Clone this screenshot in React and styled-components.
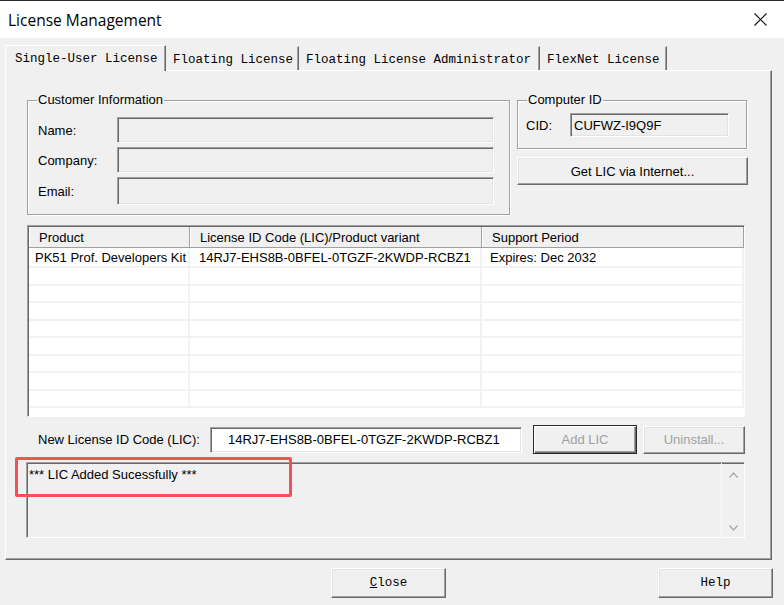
import React from "react";
import styled, { createGlobalStyle } from "styled-components";

const GlobalStyle = createGlobalStyle`
  html, body { margin: 0; padding: 0; background: #f0f0f0; }
  #root { width: 784px; height: 605px; }
`;

const ui = `"Liberation Sans", Arial, sans-serif`;
const mono = `"Liberation Mono", "Courier New", monospace`;

const Window = styled.div`
  position: relative;
  width: 784px;
  height: 605px;
  display: flex;
  flex-direction: column;
  background: #f0f0f0;
  overflow: hidden;
  font-family: ${ui};
  font-size: 13px;
  color: #000;
`;

const TitleBar = styled.div`
  height: 38px;
  box-sizing: border-box;
  border-top: 1px solid #2a2a2a;
  background: #fff;
  display: flex;
  align-items: center;
  justify-content: space-between;
  padding: 0 17px 0 8px;
`;

const Title = styled.span`
  font-family: "Open Sans", "Noto Sans", sans-serif;
  font-size: 15.5px;
  color: #000;
`;

const CloseGlyph = styled.svg`
  width: 13px;
  height: 13px;
  display: block;
`;

const Body = styled.div`
  flex: 1;
  display: flex;
  flex-direction: column;
  padding: 6px 11px 0 5px;
`;

const TabStrip = styled.div`
  display: flex;
  align-items: flex-end;
  height: 26px;
`;

const Tab = styled.div`
  height: ${(p) => (p.$active ? 26 : 24)}px;
  box-sizing: border-box;
  width: ${(p) => p.$w}px;
  padding-left: ${(p) => (p.$active ? 9 : 6)}px;
  display: flex;
  align-items: center;
  font-family: ${mono};
  font-size: 12.5px;
  color: #000;
  background: #f0f0f0;
  border-top: 1px solid ${(p) => (p.$active ? "#fff" : "#f0f0f0")};
  border-left: 1px solid ${(p) => (p.$active ? "#fff" : "#f0f0f0")};
  border-right: 1px solid #696969;
  box-shadow: inset -1px 0 #a0a0a0;
  padding-top: ${(p) => (p.$active ? 0 : 2)}px;
  margin-bottom: ${(p) => (p.$active ? -1 : 0)}px;
  position: relative;
  z-index: ${(p) => (p.$active ? 2 : 1)};
`;

const Panel = styled.div`
  width: 767px;
  height: 490px;
  box-sizing: border-box;
  border-top: 1px solid #fff;
  border-left: 1px solid #fff;
  border-right: 1px solid #696969;
  border-bottom: 1px solid #696969;
  box-shadow: inset -1px -1px #a0a0a0;
  padding: 22px 0 0 21px;
  display: flex;
  flex-direction: column;
`;

const TopGrid = styled.div`
  display: grid;
  grid-template-columns: 483px 231px;
  column-gap: 7px;
  align-items: start;
`;

const Group = styled.fieldset`
  margin: 0;
  padding: 0 10px;
  min-width: 0;
  box-sizing: border-box;
  width: ${(p) => p.$w}px;
  height: ${(p) => p.$h}px;
  border: 1px solid #a0a0a0;
  box-shadow: inset 1px 1px #fff, 1px 1px #fff;
`;

const Legend = styled.legend`
  padding: 0 1px;
  margin-left: -1px;
  font-size: 13px;
  line-height: 14px;
  color: #000;
`;

const FieldRows = styled.div`
  display: flex;
  flex-direction: column;
  gap: 4px;
  padding-top: 10px;
`;

const FieldRow = styled.div`
  display: flex;
  align-items: center;
`;

const FieldLabel = styled.span`
  width: ${(p) => p.$w}px;
  flex-shrink: 0;
`;

const Sunken = styled.div`
  box-sizing: border-box;
  width: ${(p) => p.$w}px;
  height: ${(p) => p.$h}px;
  background: ${(p) => (p.$white ? "#fff" : "#f0f0f0")};
  border-style: solid;
  border-width: 1px;
  border-color: #a0a0a0 #fff #fff #a0a0a0;
  box-shadow: inset 1px 1px #696969, inset -1px -1px #e3e3e3;
  display: flex;
  align-items: center;
  padding-left: ${(p) => p.$pad || 0}px;
  font-size: 13px;
  white-space: nowrap;
`;

const RightColumn = styled.div`
  display: flex;
  flex-direction: column;
  gap: 8px;
`;

const CidRow = styled.div`
  display: flex;
  align-items: center;
  padding-top: 6px;
  margin-left: -2px;
`;

const Button = styled.div`
  box-sizing: border-box;
  width: ${(p) => p.$w}px;
  height: ${(p) => p.$h}px;
  background: #f0f0f0;
  display: flex;
  align-items: center;
  justify-content: center;
  border-style: solid;
  border-width: 1px;
  border-color: ${(p) =>
    p.$default ? "#2b2b2b #2b2b2b #2b2b2b #2b2b2b" : "#fff #696969 #696969 #fff"};
  box-shadow: ${(p) =>
    p.$default
      ? "inset 1px 1px #fff, inset -1px -1px #696969, inset -2px -2px #a0a0a0"
      : "inset -1px -1px #a0a0a0, inset 1px 1px #e3e3e3"};
  color: ${(p) => (p.$disabled ? "#a0a0a0" : "#000")};
  font-family: ${(p) => (p.$mono ? mono : ui)};
  font-size: ${(p) => (p.$mono ? 12.5 : 13)}px;
  flex-shrink: 0;
`;

const Accel = styled.span`
  text-decoration: underline;
`;

const ListView = styled.div`
  margin-top: 10px;
  width: 718px;
  height: 192px;
  box-sizing: border-box;
  border-style: solid;
  border-width: 1px;
  border-color: #a0a0a0 #fff #fff #a0a0a0;
  box-shadow: inset 1px 1px #696969;
  background: #fff;
  padding: 1px 0 0 1px;
  overflow: hidden;
`;

const Cols = `161px 292px 1fr`;

const HeaderRow = styled.div`
  display: grid;
  grid-template-columns: ${Cols};
  height: 21px;
  background: #f0f0f0;
  border-bottom: 1px solid #a0a0a0;
  box-sizing: border-box;
`;

const HeaderCell = styled.div`
  display: flex;
  align-items: center;
  padding-left: 9px;
  border-left: 1px solid #fff;
  border-right: 1px solid #a0a0a0;
  white-space: nowrap;
  overflow: hidden;
`;

const Row = styled.div`
  display: grid;
  grid-template-columns: ${Cols};
  height: ${(p) => p.$h}px;
  box-sizing: border-box;
  border-bottom: 2px solid #f2f2f2;
`;

const Cell = styled.div`
  display: flex;
  align-items: center;
  padding-left: ${(p) => p.$pad}px;
  border-right: 2px solid #f2f2f2;
  white-space: nowrap;
  overflow: hidden;
`;

const LicRow = styled.div`
  margin-top: 8px;
  display: flex;
  align-items: center;
  height: 29px;
  padding-left: 11px;
`;

const LicLabel = styled.span`
  width: 172px;
  flex-shrink: 0;
`;

const Gap = styled.div`
  width: ${(p) => p.$w}px;
  flex-shrink: 0;
`;

const StatusBox = styled.div`
  margin: 8px 0 0 -1px;
  width: 719px;
  height: 76px;
  box-sizing: border-box;
  border-style: solid;
  border-width: 1px;
  border-color: #a0a0a0 #fff #fff #a0a0a0;
  box-shadow: inset 1px 1px #696969;
  display: flex;
`;

const StatusText = styled.div`
  flex: 1;
  padding: 4px 0 0 2px;
  font-size: 13px;
  line-height: 16px;
`;

const ScrollTrack = styled.div`
  width: 22px;
  border-left: 1px solid #f8f8f8;
  display: flex;
  flex-direction: column;
  justify-content: space-between;
  align-items: center;
  padding: 9px 0 6px;
`;

const Chevron = styled.svg`
  width: 9px;
  height: 6px;
  display: block;
`;

const Footer = styled.div`
  margin-top: 8px;
  display: flex;
  justify-content: space-between;
  padding-left: 326px;
`;

const Highlight = styled.div`
  position: absolute;
  left: 15px;
  top: 457px;
  width: 277px;
  height: 40px;
  box-sizing: border-box;
  border: 3px solid #f15352;
  border-radius: 2px;
  pointer-events: none;
`;

const tabs = [
  { label: "Single-User License", w: 161, active: true },
  { label: "Floating License", w: 133 },
  { label: "Floating License Administrator", w: 241 },
  { label: "FlexNet License", w: 127 },
];

// alternating heights give the 17.5px row pitch of the list control
const emptyRowHeights = [18, 17, 18, 17, 18, 17, 18, 17];

export default function App() {
  return (
    <>
      <GlobalStyle />
      <Window>
        <TitleBar>
          <Title>License Management</Title>
          <CloseGlyph viewBox="0 0 13 13">
            <path d="M0.5 0.5 L12.5 12.5 M12.5 0.5 L0.5 12.5" stroke="#111" strokeWidth="1.1" />
          </CloseGlyph>
        </TitleBar>
        <Body>
          <TabStrip>
            {tabs.map((t) => (
              <Tab key={t.label} $w={t.w} $active={t.active}>
                {t.label}
              </Tab>
            ))}
          </TabStrip>
          <Panel>
            <TopGrid>
              <Group $w={483} $h={122}>
                <Legend>Customer Information</Legend>
                <FieldRows>
                  <FieldRow>
                    <FieldLabel $w={79}>Name:</FieldLabel>
                    <Sunken $w={377} $h={26} />
                  </FieldRow>
                  <FieldRow>
                    <FieldLabel $w={79}>Company:</FieldLabel>
                    <Sunken $w={377} $h={26} />
                  </FieldRow>
                  <FieldRow>
                    <FieldLabel $w={79}>Email:</FieldLabel>
                    <Sunken $w={377} $h={28} />
                  </FieldRow>
                </FieldRows>
              </Group>
              <RightColumn>
                <Group $w={230} $h={56}>
                  <Legend>Computer ID</Legend>
                  <CidRow>
                    <FieldLabel $w={44}>CID:</FieldLabel>
                    <Sunken $w={159} $h={24} $pad={3}>
                      CUFWZ-I9Q9F
                    </Sunken>
                  </CidRow>
                </Group>
                <Button $w={231} $h={28}>
                  Get LIC via Internet...
                </Button>
              </RightColumn>
            </TopGrid>

            <ListView>
              <HeaderRow>
                <HeaderCell>Product</HeaderCell>
                <HeaderCell>License ID Code (LIC)/Product variant</HeaderCell>
                <HeaderCell>Support Period</HeaderCell>
              </HeaderRow>
              <Row $h={20}>
                <Cell $pad={6}>PK51 Prof. Developers Kit</Cell>
                <Cell $pad={9}>14RJ7-EHS8B-0BFEL-0TGZF-2KWDP-RCBZ1</Cell>
                <Cell $pad={8}>Expires: Dec 2032</Cell>
              </Row>
              {emptyRowHeights.map((h, i) => (
                <Row key={i} $h={h}>
                  <Cell />
                  <Cell />
                  <Cell />
                </Row>
              ))}
            </ListView>

            <LicRow>
              <LicLabel>New License ID Code (LIC):</LicLabel>
              <Sunken $w={312} $h={26} $white $pad={17}>
                14RJ7-EHS8B-0BFEL-0TGZF-2KWDP-RCBZ1
              </Sunken>
              <Gap $w={11} />
              <Button $w={104} $h={29} $default $disabled>
                Add LIC
              </Button>
              <Gap $w={6} />
              <Button $w={102} $h={28} $disabled>
                Uninstall...
              </Button>
            </LicRow>

            <StatusBox>
              <StatusText>*** LIC Added Sucessfully ***</StatusText>
              <ScrollTrack>
                <Chevron viewBox="0 0 9 6">
                  <path d="M0.5 5.5 L4.5 1 L8.5 5.5" fill="none" stroke="#a6a6a6" strokeWidth="1.2" />
                </Chevron>
                <Chevron viewBox="0 0 9 6">
                  <path d="M0.5 0.5 L4.5 5 L8.5 0.5" fill="none" stroke="#a6a6a6" strokeWidth="1.2" />
                </Chevron>
              </ScrollTrack>
            </StatusBox>
          </Panel>
          <Footer>
            <Button $w={115} $h={30} $mono>
              <Accel>C</Accel>lose
            </Button>
            <Button $w={115} $h={30} $mono>
              Help
            </Button>
          </Footer>
        </Body>
        <Highlight />
      </Window>
    </>
  );
}
